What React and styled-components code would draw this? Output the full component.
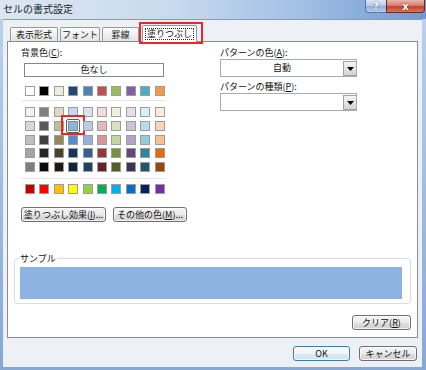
import styled, { createGlobalStyle, css } from "styled-components";

const GlobalStyle = createGlobalStyle`
  body {
    margin: 0;
    font-family: "Noto Sans CJK JP", "Noto Sans", sans-serif;
    color: #111;
  }
`;

const themeColors = ["#ffffff", "#000000", "#eeece1", "#1f497d", "#4f81bd", "#c0504d", "#9bbb59", "#8064a2", "#4bacc6", "#f79646"];

const tintColors = [
  ["#f2f2f2", "#7f7f7f", "#ddd9c3", "#c6d9f0", "#dbe5f1", "#f2dcdb", "#ebf1dd", "#e5e0ec", "#dbeef3", "#fdeada"],
  ["#d8d8d8", "#595959", "#c4bd97", "#8db3e2", "#b8cce4", "#e5b9b7", "#d7e3bc", "#ccc1d9", "#b7dde8", "#fbd5b5"],
  ["#bfbfbf", "#3f3f3f", "#938953", "#548dd4", "#95b3d7", "#d99694", "#c3d69b", "#b2a2c7", "#92cddc", "#fac08f"],
  ["#a5a5a5", "#262626", "#494429", "#17365d", "#366092", "#953734", "#76923c", "#5f497a", "#31859b", "#e36c09"],
  ["#7f7f7f", "#0c0c0c", "#1d1b10", "#0f243e", "#244061", "#632423", "#4f6128", "#3f3151", "#205867", "#974806"],
];

const standardColors = ["#c00000", "#ff0000", "#ffc000", "#ffff00", "#92d050", "#00b050", "#00b0f0", "#0070c0", "#002060", "#7030a0"];

const tabs = [
  { label: "表示形式", width: 48 },
  { label: "フォント", width: 40 },
  { label: "罫線", width: 37 },
  { label: "塗りつぶし", width: 55, active: true },
];

const selected = "#8db3e2";

const App = () => {
  return (
    <>
      <GlobalStyle />
      <Window>
        <TitleBar>
          <Title>セルの書式設定</Title>
          <Controls>
            <HelpButton>?</HelpButton>
            <CloseButton>x</CloseButton>
          </Controls>
        </TitleBar>
        <Client>
          <TabRow>
            {tabs.map((t) => (
              <Tab key={t.label} $width={t.width} $active={t.active}>
                {t.active ? <FocusText>{t.label}</FocusText> : t.label}
              </Tab>
            ))}
          </TabRow>
          <Panel>
            <TopRow>
              <LeftCol>
                <Label>
                  背景色(<u>C</u>):
                </Label>
                <NoColorButton>色なし</NoColorButton>
                <SwatchGrid $top={9}>
                  {themeColors.map((c, i) => (
                    <Swatch key={i} $color={c} />
                  ))}
                </SwatchGrid>
                <Divider $top={4} />
                <SwatchGrid $top={6}>
                  {tintColors.flat().map((c, i) => (
                    <Swatch key={i} $color={c} $selected={i === 13} />
                  ))}
                </SwatchGrid>
                <Divider $top={6} />
                <SwatchGrid $top={5}>
                  {standardColors.map((c, i) => (
                    <Swatch key={i} $color={c} />
                  ))}
                </SwatchGrid>
              </LeftCol>
              <RightCol>
                <Label>
                  パターンの色(<u>A</u>):
                </Label>
                <Select>
                  <SelectValue>自動</SelectValue>
                  <ArrowButton>
                    <svg width="7" height="4" viewBox="0 0 7 4">
                      <polygon points="0,0 7,0 3.5,4" fill="#000" />
                    </svg>
                  </ArrowButton>
                </Select>
                <Label $top={3}>
                  パターンの種類(<u>P</u>):
                </Label>
                <Select>
                  <SelectValue />
                  <ArrowButton>
                    <svg width="7" height="4" viewBox="0 0 7 4">
                      <polygon points="0,0 7,0 3.5,4" fill="#000" />
                    </svg>
                  </ArrowButton>
                </Select>
              </RightCol>
            </TopRow>
            <ButtonRow>
              <Button $width={85}>
                塗りつぶし効果(<u>I</u>)...
              </Button>
              <Button $width={74}>
                その他の色(<u>M</u>)...
              </Button>
            </ButtonRow>
            <SampleGroup>
              <Legend>サンプル</Legend>
              <SampleFill style={{ background: selected }} />
            </SampleGroup>
            <ClearRow>
              <Button $width={59}>
                クリア(<u>R</u>)
              </Button>
            </ClearRow>
          </Panel>
          <Footer>
            <Button $width={57} $height={15} $primary>
              OK
            </Button>
            <Button $width={58} $height={15}>
              キャンセル
            </Button>
          </Footer>
        </Client>
      </Window>
    </>
  );
};

const Window = styled.div`
  width: 426px;
  height: 370px;
  box-sizing: border-box;
  display: flex;
  flex-direction: column;
  background: linear-gradient(180deg, #bcd3ef 0%, #9ab9e1 60%, #86a8d6 100%);
`;

const TitleBar = styled.div`
  height: 19px;
  flex: none;
  display: flex;
  align-items: flex-start;
  background: linear-gradient(90deg, #dbe6f3 0%, #c9daee 40%, #a3c0e5 70%, #7199cf 100%);
`;

const Title = styled.div`
  font-size: 10px;
  line-height: 18px;
  padding-left: 3px;
  color: #1b1b1b;
`;

const Controls = styled.div`
  margin-left: auto;
  margin-right: 1px;
  display: flex;
`;

const ctrl = css`
  height: 13px;
  box-sizing: border-box;
  border-top: none;
  display: flex;
  align-items: center;
  justify-content: center;
  color: #fff;
  font-family: "DejaVu Sans", sans-serif;
  font-weight: bold;
  text-shadow: 0 0 2px rgba(0, 0, 0, 0.6);
`;

const HelpButton = styled.div`
  ${ctrl};
  width: 21px;
  font-size: 9px;
  border: 1px solid #5a78a3;
  border-top: none;
  border-right: none;
  border-radius: 0 0 0 4px;
  background: linear-gradient(180deg, #dce7f5 0%, #b3cbea 48%, #8eaedb 52%, #b6cdea 100%);
`;

const CloseButton = styled.div`
  ${ctrl};
  width: 39px;
  font-size: 10px;
  border: 1px solid #6b2a22;
  border-top: none;
  border-radius: 0 0 4px 0;
  background: linear-gradient(180deg, #e9b6ad 0%, #d67e70 45%, #c4422f 55%, #d9775f 100%);
`;

const Client = styled.div`
  flex: 1;
  margin: 0 4px 3px 3px;
  padding: 5px 4px 0 4px;
  display: flex;
  flex-direction: column;
  background: #edf0f4;
  border-top: 1px solid #7f9dc6;
`;

const TabRow = styled.div`
  height: 17px;
  display: flex;
  align-items: flex-end;
  gap: 2px;
  padding-left: 3px;
  margin-bottom: -1px;
  position: relative;
  z-index: 1;
`;

const Tab = styled.div`
  position: relative;
  width: ${({ $width }) => $width}px;
  height: ${({ $active }) => ($active ? 17 : 15)}px;
  box-sizing: border-box;
  display: flex;
  align-items: center;
  justify-content: center;
  font-size: 9px;
  white-space: nowrap;
  border: 1px solid #919b9c;
  border-bottom: ${({ $active }) => ($active ? "none" : "1px solid #898c95")};
  border-radius: 2px 2px 0 0;
  background: ${({ $active }) =>
    $active ? "#ffffff" : "linear-gradient(180deg, #fdfdfd 0%, #f0f0f0 50%, #e3e3e3 100%)"};
  margin-left: ${({ $active }) => ($active ? "1px" : "0")};

  ${({ $active }) =>
    $active &&
    css`
      &::after {
        content: "";
        position: absolute;
        left: -4px;
        right: -7px;
        top: -4px;
        bottom: -2px;
        border: 2px solid #e8282c;
      }
    `}
`;

const FocusText = styled.span`
  border: 1px dotted #333;
  padding: 0 1px;
  line-height: 10px;
  white-space: nowrap;
`;

const Panel = styled.div`
  height: 297px;
  flex: none;
  box-sizing: border-box;
  border: 1px solid #898c95;
  background: #ffffff;
  padding: 4px 6px 0 6px;
  display: flex;
  flex-direction: column;
`;

const TopRow = styled.div`
  display: flex;
  margin-left: 7px;
`;

const LeftCol = styled.div`
  width: 144px;
  display: flex;
  flex-direction: column;
`;

const RightCol = styled.div`
  width: 137px;
  margin-left: 55px;
  display: flex;
  flex-direction: column;
`;

const Label = styled.div`
  font-size: 9px;
  line-height: 13px;
  height: 13px;
  margin-top: ${({ $top }) => $top || 0}px;
`;

const NoColorButton = styled.div`
  margin: 4px 0 0 3px;
  width: 140px;
  height: 14px;
  box-sizing: border-box;
  border: 1px solid #878787;
  background: #fff;
  font-size: 9px;
  line-height: 12px;
  text-align: center;
`;

const SwatchGrid = styled.div`
  display: grid;
  grid-template-columns: repeat(10, 10px);
  column-gap: 4.4px;
  row-gap: 3.75px;
  margin-left: 4px;
  margin-top: ${({ $top }) => $top}px;
`;

const Swatch = styled.div`
  position: relative;
  width: 10px;
  height: 10px;
  box-sizing: border-box;
  border: 1px solid #9d9d9d;
  background: ${({ $color }) => $color};

  ${({ $selected }) =>
    $selected &&
    css`
      &::after {
        content: "";
        position: absolute;
        inset: -3px;
        border: 1px solid #5e5e5e;
        border-radius: 2px;
        box-shadow: inset 0 0 0 1px #ffffff, inset 0 0 0 2px #8a8a8a;
      }
      &::before {
        content: "";
        position: absolute;
        left: -8px;
        right: -8px;
        top: -7px;
        bottom: -5px;
        border: 2px solid #e8282c;
      }
    `}
`;

const Divider = styled.div`
  height: 1px;
  width: 144px;
  background: #e1e6ec;
  margin-top: ${({ $top }) => $top}px;
`;

const Select = styled.div`
  height: 18px;
  box-sizing: border-box;
  border: 1px solid #a5acb5;
  background: #fff;
  display: flex;
  align-items: stretch;
`;

const SelectValue = styled.div`
  flex: 1;
  font-size: 9px;
  line-height: 16px;
  text-align: center;
`;

const ArrowButton = styled.div`
  width: 13px;
  margin: 1px 0 0 0;
  box-sizing: border-box;
  border: 1px solid #a3a3a3;
  border-right: none;
  background: linear-gradient(180deg, #f4f4f4 0%, #e4e4e4 50%, #d3d3d3 100%);
  display: flex;
  align-items: center;
  justify-content: center;
`;

const ButtonRow = styled.div`
  display: flex;
  gap: 7px;
  margin: 13px 0 0 7px;
`;

const Button = styled.div`
  width: ${({ $width }) => $width}px;
  height: ${({ $height }) => $height || 15}px;
  box-sizing: border-box;
  border: 1px solid ${({ $primary }) => ($primary ? "#3c7fb1" : "#707070")};
  border-radius: 3px;
  background: ${({ $primary }) =>
    $primary
      ? "linear-gradient(180deg, #f7fbfe 0%, #eef5fb 50%, #dce9f5 51%, #d3e3f2 100%)"
      : "linear-gradient(180deg, #f4f4f4 0%, #ececec 50%, #dedede 51%, #d2d2d2 100%)"};
  box-shadow: inset 0 0 0 1px rgba(255, 255, 255, 0.7);
  display: flex;
  align-items: center;
  justify-content: center;
  font-size: 9px;
  white-space: nowrap;
`;

const SampleGroup = styled.fieldset`
  margin: 30px 0 0 0;
  padding: 2px 8px 4px 5px;
  border: 1px solid #d6dee6;
  border-radius: 3px;
`;

const Legend = styled.legend`
  font-size: 9px;
  line-height: 13px;
  padding: 0 1px;
  margin-left: -1px;
`;

const SampleFill = styled.div`
  height: 32px;
`;

const ClearRow = styled.div`
  display: flex;
  justify-content: flex-end;
  margin-top: 11px;
`;

const Footer = styled.div`
  display: flex;
  justify-content: flex-end;
  gap: 9px;
  margin-top: 8px;
  padding-right: 1px;
`;

export default App;
